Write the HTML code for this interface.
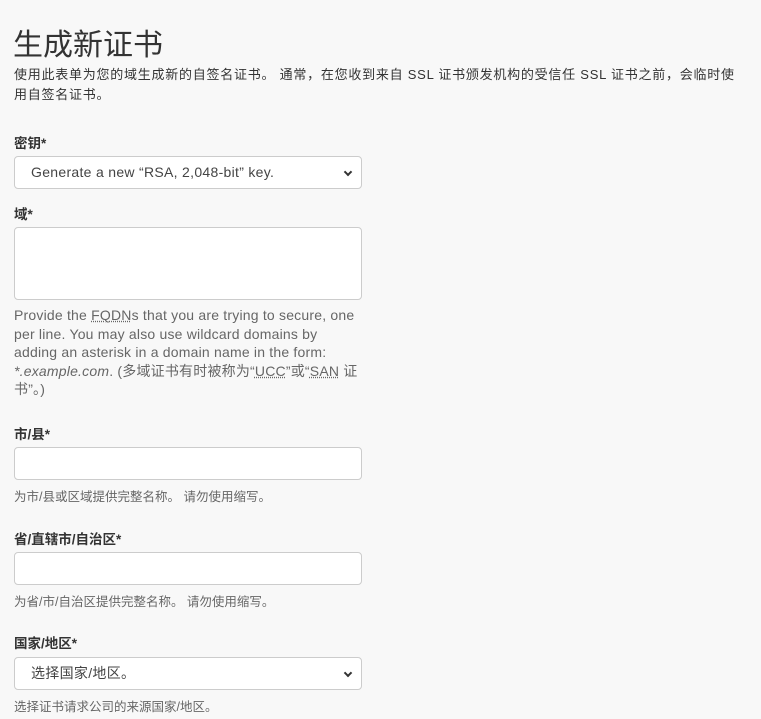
<!DOCTYPE html>
<html><head><meta charset="utf-8"><style>
body{margin:0;background:#f8f8f8;font-family:"Liberation Sans","Noto Sans CJK SC",sans-serif;color:#333;width:761px;height:719px;overflow:hidden;position:relative}
.a{position:absolute;left:14px}
h1{position:absolute;left:13px;top:20px;margin:0;font-size:30px;font-weight:normal;color:#333;font-family:"Noto Sans CJK SC",sans-serif}
.d{font-size:13px;line-height:20px;top:65px;width:745px;letter-spacing:0.75px;white-space:nowrap}
.l{font-size:13.5px;font-weight:bold;color:#333}
.box{position:absolute;left:14px;width:348px;border:1px solid #ccc;border-radius:4px;background:#fff;box-sizing:border-box}
.sel{height:33px;font-size:14px;line-height:31px;padding-left:16px;color:#444;letter-spacing:0.3px}
.sel:after{content:"";position:absolute;right:10px;top:12px;width:4px;height:4px;border-right:2px solid #333;border-bottom:2px solid #333;transform:rotate(45deg)}
.h{font-size:14px;line-height:18.5px;color:#666;width:360px;letter-spacing:0.2px;white-space:nowrap}
.s{font-size:12.5px;color:#666}
abbr{text-decoration:underline dotted;}
</style></head><body>
<h1>生成新证书</h1>
<div class="a d">使用此表单为您的域生成新的自签名证书。 通常，在您收到来自 SSL 证书颁发机构的受信任 SSL 证书之前，会临时使<br>用自签名证书。</div>
<div class="a l" style="top:132px">密钥*</div>
<div class="box sel" style="top:156px">Generate a new “RSA, 2,048-bit” key.</div>
<div class="a l" style="top:203px">域*</div>
<div class="box" style="top:227px;height:73px"></div>
<div class="a h" style="top:306px">Provide the <abbr>FQDN</abbr>s that you are trying to secure, one<br>per line. You may also use wildcard domains by<br>adding an asterisk in a domain name in the form:<br><i>*.example.com</i>. (多域证书有时被称为“<abbr>UCC</abbr>”或“<abbr>SAN</abbr> 证<br>书”。)</div>
<div class="a l" style="top:423px">市/县*</div>
<div class="box" style="top:447px;height:33px"></div>
<div class="a s" style="top:486px">为市/县或区域提供完整名称。 请勿使用缩写。</div>
<div class="a l" style="top:528px">省/直辖市/自治区*</div>
<div class="box" style="top:552px;height:33px"></div>
<div class="a s" style="top:591px">为省/市/自治区提供完整名称。 请勿使用缩写。</div>
<div class="a l" style="top:632px">国家/地区*</div>
<div class="box sel" style="top:657px">选择国家/地区。</div>
<div class="a s" style="top:696px">选择证书请求公司的来源国家/地区。</div>
</body></html>
